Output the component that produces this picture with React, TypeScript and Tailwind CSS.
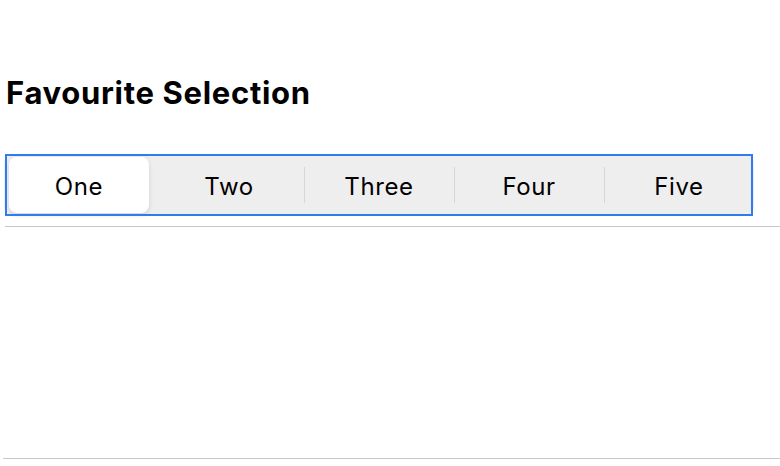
const options = ['One', 'Two', 'Three', 'Four', 'Five'];

export default function App() {
  const selected = 0;

  return (
    <div className="h-[466px] w-[780px] bg-white font-['Inter',sans-serif] text-black">
      <div className="pt-[73px] pl-[6px]">
        <h1 className="text-[31px] font-bold leading-[40px] tracking-[0.7px]">Favourite Selection</h1>
      </div>

      <div className="mt-[42px] pl-[4px]">
        <div className="relative w-[750px]">
          <div className="flex h-[60px] rounded-[8px] bg-[#eeeeee]">
            {options.map((label, i) => {
              const isSel = i === selected;
              const showDivider = i > 0 && i - 1 !== selected && i !== selected;
              return (
                <div key={label} className="relative flex flex-1 items-center">
                  {showDivider && <div className="absolute left-0 top-[12px] h-[36px] w-px bg-[#d6d6d6]" />}
                  <div
                    className={
                      isSel
                        ? 'mx-[5px] my-[2px] flex h-[56px] w-full items-center justify-center rounded-[8px] bg-white shadow-[0_2px_5px_rgba(0,0,0,0.12)]'
                        : 'flex h-full w-full items-center justify-center'
                    }
                  >
                    <span className="mt-[3px] text-[24px] leading-none tracking-[0.6px]">{label}</span>
                  </div>
                </div>
              );
            })}
          </div>
          <div className="pointer-events-none absolute -top-px -bottom-px left-px right-px border-2 border-[#2f7cf2]" />
        </div>
      </div>

      <div className="ml-[5px] mt-[11px] h-px bg-[#c8c8c8]" />
      <div className="ml-[3px] mt-[231px] h-px bg-[#c8c8c8]" />
    </div>
  );
}
